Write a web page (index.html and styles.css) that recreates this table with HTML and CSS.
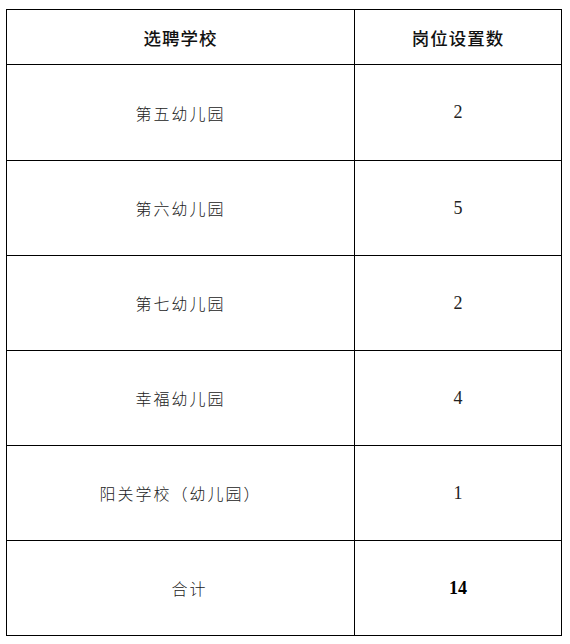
FILE: index.html
```html
<!DOCTYPE html>
<html lang="zh">
<head>
<meta charset="utf-8">
<link rel="stylesheet" href="styles.css">
</head>
<body>
<table class="quota">
  <colgroup><col class="c1"><col class="c2"></colgroup>
  <thead>
    <tr class="head"><th>选聘学校</th><th>岗位设置数</th></tr>
  </thead>
  <tbody>
    <tr class="row first"><td class="name">第五幼儿园</td><td class="num">2</td></tr>
    <tr class="row"><td class="name">第六幼儿园</td><td class="num">5</td></tr>
    <tr class="row"><td class="name">第七幼儿园</td><td class="num">2</td></tr>
    <tr class="row"><td class="name">幸福幼儿园</td><td class="num">4</td></tr>
    <tr class="row"><td class="name">阳关学校（幼儿园）</td><td class="num">1</td></tr>
    <tr class="row"><td class="name sum">合计</td><td class="num total">14</td></tr>
  </tbody>
</table>
</body>
</html>
```
FILE: styles.css
```css
html, body {
  margin: 0;
  padding: 0;
  background: #fff;
}
body {
  padding: 9px 0 0 6px;
}
.quota {
  border-collapse: collapse;
  width: 555px;
  table-layout: fixed;
  color: #1a1a1a;
}
.c1 { width: 348px; }
.c2 { width: 207px; }
.quota th, .quota td {
  border: 1.5px solid #000;
  text-align: center;
  vertical-align: middle;
  padding: 0;
}
.head { height: 55px; }
.head th {
  font-family: "Noto Sans CJK SC", sans-serif;
  font-weight: 500;
  font-size: 17.5px;
  letter-spacing: 1px;
  color: #111;
}
.row { height: 95px; }
.row.first { height: 96px; }
.name {
  font-family: "Noto Sans CJK SC", sans-serif;
  font-weight: 300;
  font-size: 16px;
  letter-spacing: 2px;
  color: #222;
}
.name.sum {
  padding-left: 18px;
}
.num {
  font-family: "Liberation Serif", "Times New Roman", serif;
  font-size: 18px;
  color: #222;
}
.num.total {
  font-weight: bold;
  color: #000;
}
```
